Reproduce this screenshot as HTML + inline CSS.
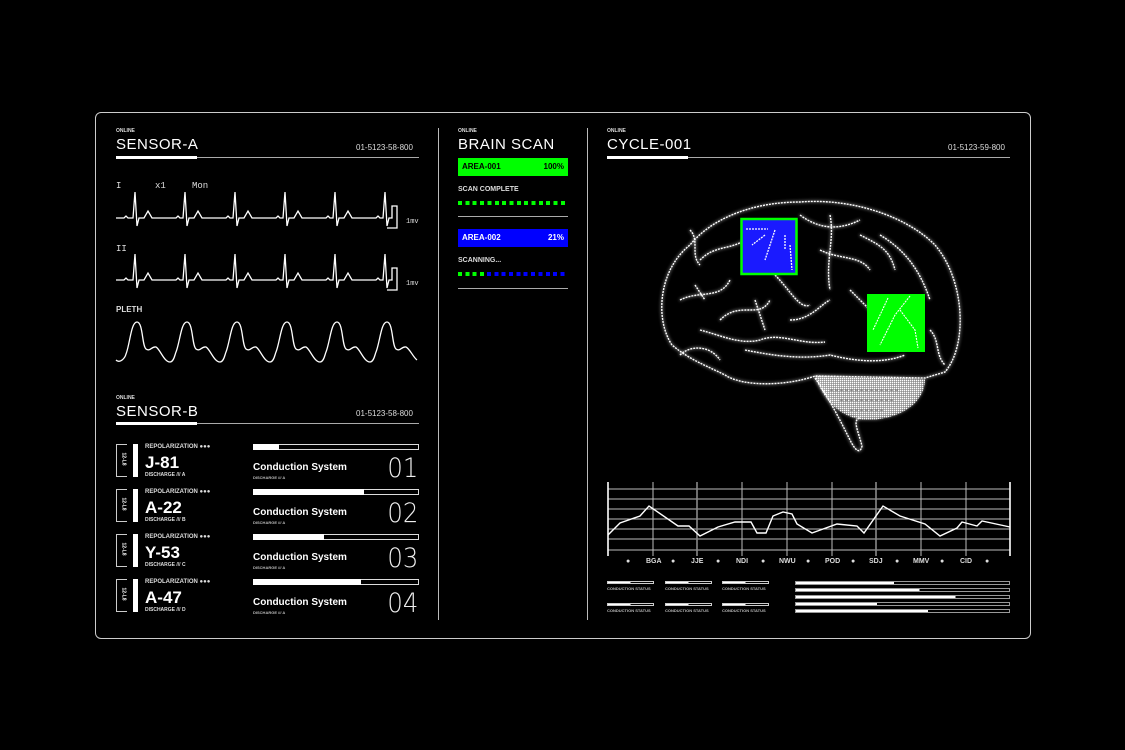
<!DOCTYPE html>
<html><head><meta charset="utf-8">
<style>
*{margin:0;padding:0;box-sizing:border-box}
body{width:1125px;height:750px;background:#000;position:relative;overflow:hidden;font-family:"Liberation Sans",sans-serif;color:#fff}
.a{position:absolute;white-space:nowrap}
.on{font-size:5px;font-weight:bold;color:#ddd}
.h{font-size:15px;letter-spacing:.5px;line-height:15px}
.code{font-size:8px;color:#ddd}
.sm{font-size:7px;font-weight:bold;color:#ddd}
.tiny{font-size:4px;font-weight:bold;color:#bbb}
.num{font-size:27px;line-height:27px;color:#eee;font-family:'DejaVu Sans',sans-serif;font-weight:200;transform:scaleX(.9);transform-origin:right}
</style></head><body>
<div class="a" style="left:95px;top:112px;width:936px;height:527px;border:1px solid #ccc;border-radius:6px"></div>
<div class="a" style="left:438px;top:128px;width:1px;height:492px;background:#bbb"></div>
<div class="a" style="left:587px;top:128px;width:1px;height:492px;background:#bbb"></div>

<div class="a on" style="left:116px;top:128px">ONLINE</div>
<div class="a h" style="left:116px;top:137px">SENSOR-A</div>
<div class="a code" style="left:356px;top:143px">01-5123-58-800</div>
<div class="a" style="left:116px;top:157px;width:303px;height:1px;background:#aaa"></div>
<div class="a" style="left:116px;top:156px;width:81px;height:3px;background:#fff"></div>
<div class="a sm" style="left:116px;top:181px;font-family:'Liberation Mono',monospace;font-weight:normal;font-size:9px">I</div>
<div class="a sm" style="left:155px;top:181px;font-family:'Liberation Mono',monospace;font-weight:normal;font-size:9px">x1</div>
<div class="a sm" style="left:192px;top:181px;font-family:'Liberation Mono',monospace;font-weight:normal;font-size:9px">Mon</div>
<div class="a sm" style="left:116px;top:244px;font-family:'Liberation Mono',monospace;font-weight:normal;font-size:9px">II</div>
<div class="a sm" style="left:116px;top:305px;font-size:8px">PLETH</div>
<div class="a" style="left:406px;top:218px;font-size:7px;color:#ddd;font-family:'Liberation Mono',monospace">1mv</div>
<div class="a" style="left:406px;top:280px;font-size:7px;color:#ddd;font-family:'Liberation Mono',monospace">1mv</div>

<svg class="a" style="left:0;top:0" width="1125" height="750" fill="none" stroke="#fff" stroke-width="1.3">
<path d="M116 218 h8 l2 -2 l2 2 h5 l2 -26 l2 34 l2 -8 h5 l4 -7 l4 7 h14 h10 l2 -2 l2 2 h3 l2 -26 l2 34 l2 -8 h5 l4 -7 l4 7 h14 h10 l2 -2 l2 2 h3 l2 -26 l2 34 l2 -8 h5 l4 -7 l4 7 h14 h10 l2 -2 l2 2 h3 l2 -26 l2 34 l2 -8 h5 l4 -7 l4 7 h14 h10 l2 -2 l2 2 h3 l2 -26 l2 34 l2 -8 h5 l4 -7 l4 7 h14 h10 l2 -2 l2 2 h3 l2 -26 l2 34 l2 -8 h3 v-12 h5 v22 h-10"/>
<path d="M116 280 h8 l2 -2 l2 2 h5 l2 -26 l2 34 l2 -8 h5 l4 -7 l4 7 h14 h10 l2 -2 l2 2 h3 l2 -26 l2 34 l2 -8 h5 l4 -7 l4 7 h14 h10 l2 -2 l2 2 h3 l2 -26 l2 34 l2 -8 h5 l4 -7 l4 7 h14 h10 l2 -2 l2 2 h3 l2 -26 l2 34 l2 -8 h5 l4 -7 l4 7 h14 h10 l2 -2 l2 2 h3 l2 -26 l2 34 l2 -8 h5 l4 -7 l4 7 h14 h10 l2 -2 l2 2 h3 l2 -26 l2 34 l2 -8 h3 v-12 h5 v22 h-10"/>
<path d="M116 360 c4 4 9 -2 10 -6 c4 -10 5 -32 11 -32 c6 0 5 24 9 27 c4 3 6 -3 10 -2 c4 2 8 15 14 15 c4 0 5 -8 6 -10 c4 -10 5 -30 11 -30 c6 0 5 24 9 27 c4 3 6 -3 10 -2 c4 2 8 15 14 15 c4 0 5 -8 6 -10 c4 -10 5 -30 11 -30 c6 0 5 24 9 27 c4 3 6 -3 10 -2 c4 2 8 15 14 15 c4 0 5 -8 6 -10 c4 -10 5 -30 11 -30 c6 0 5 24 9 27 c4 3 6 -3 10 -2 c4 2 8 15 14 15 c4 0 5 -8 6 -10 c4 -10 5 -30 11 -30 c6 0 5 24 9 27 c4 3 6 -3 10 -2 c4 2 8 15 14 15 c4 0 5 -8 6 -10 c4 -10 5 -30 11 -30 c6 0 5 24 9 27 c4 3 6 -3 10 -2 c4 2 7 10 11 13"/>
<g stroke="#bbb" stroke-width="1">
<path d="M608 489H1010M608 499H1010M608 509H1010M608 519H1010M608 529H1010M608 539H1010M608 550H1010"/>
<path d="M653 482V556M742 482V556M787 482V556M832 482V556M921 482V556M966 482V556"/>
</g>
<path d="M697 482V556M876 482V556" stroke="#888" stroke-width="1.6"/>
<path d="M608 482V556M1010 482V556" stroke="#fff" stroke-width="1.6"/>
<polyline stroke-width="1.4" points="608,535 620,523 640,516 649,506 678,526 689,526 700,536 718,527 735,522 751,522 757,533 766,533 773,516 783,512 792,514 797,524 812,533 837,524 857,526 864,533 883,506 900,516 925,524 940,536 957,528 962,522 977,526 982,521 1010,527"/>
</svg>

<div class="a on" style="left:116px;top:395px">ONLINE</div>
<div class="a h" style="left:116px;top:404px">SENSOR-B</div>
<div class="a code" style="left:356px;top:409px">01-5123-58-800</div>
<div class="a" style="left:116px;top:423px;width:303px;height:1px;background:#aaa"></div>
<div class="a" style="left:116px;top:422px;width:81px;height:3px;background:#fff"></div>

<div class="a" style="left:0;top:444px">
<div class="a" style="left:116px;top:0;width:11px;height:33px;border:1px solid #ccc;border-right:none"></div>
<div class="a" style="left:117px;top:12px;font-size:5px;font-weight:bold;transform:rotate(90deg)">12-L8</div>
<div class="a" style="left:133px;top:0;width:5px;height:33px;background:#fff"></div>
<div class="a sm" style="left:145px;top:0;font-size:6px">REPOLARIZATION ●●●</div>
<div class="a" style="left:145px;top:10px;font-size:17px;font-weight:bold;line-height:17px">J-81</div>
<div class="a sm" style="left:145px;top:28px;font-size:5px">DISCHARGE /// A</div>
<div class="a" style="left:253px;top:0;width:166px;height:6px;border:1px solid #ddd"></div>
<div class="a" style="left:253px;top:0;width:26px;height:6px;background:#fff"></div>
<div class="a" style="left:253px;top:18px;font-size:10px;font-weight:bold">Conduction System</div>
<div class="a tiny" style="left:253px;top:31px">DISCHARGE /// A</div>
<div class="a num" style="left:384px;top:11px">01</div>
</div>
<div class="a" style="left:0;top:489px">
<div class="a" style="left:116px;top:0;width:11px;height:33px;border:1px solid #ccc;border-right:none"></div>
<div class="a" style="left:117px;top:12px;font-size:5px;font-weight:bold;transform:rotate(90deg)">12-L8</div>
<div class="a" style="left:133px;top:0;width:5px;height:33px;background:#fff"></div>
<div class="a sm" style="left:145px;top:0;font-size:6px">REPOLARIZATION ●●●</div>
<div class="a" style="left:145px;top:10px;font-size:17px;font-weight:bold;line-height:17px">A-22</div>
<div class="a sm" style="left:145px;top:28px;font-size:5px">DISCHARGE /// B</div>
<div class="a" style="left:253px;top:0;width:166px;height:6px;border:1px solid #ddd"></div>
<div class="a" style="left:253px;top:0;width:111px;height:6px;background:#fff"></div>
<div class="a" style="left:253px;top:18px;font-size:10px;font-weight:bold">Conduction System</div>
<div class="a tiny" style="left:253px;top:31px">DISCHARGE /// A</div>
<div class="a num" style="left:384px;top:11px">02</div>
</div>
<div class="a" style="left:0;top:534px">
<div class="a" style="left:116px;top:0;width:11px;height:33px;border:1px solid #ccc;border-right:none"></div>
<div class="a" style="left:117px;top:12px;font-size:5px;font-weight:bold;transform:rotate(90deg)">12-L8</div>
<div class="a" style="left:133px;top:0;width:5px;height:33px;background:#fff"></div>
<div class="a sm" style="left:145px;top:0;font-size:6px">REPOLARIZATION ●●●</div>
<div class="a" style="left:145px;top:10px;font-size:17px;font-weight:bold;line-height:17px">Y-53</div>
<div class="a sm" style="left:145px;top:28px;font-size:5px">DISCHARGE /// C</div>
<div class="a" style="left:253px;top:0;width:166px;height:6px;border:1px solid #ddd"></div>
<div class="a" style="left:253px;top:0;width:71px;height:6px;background:#fff"></div>
<div class="a" style="left:253px;top:18px;font-size:10px;font-weight:bold">Conduction System</div>
<div class="a tiny" style="left:253px;top:31px">DISCHARGE /// A</div>
<div class="a num" style="left:384px;top:11px">03</div>
</div>
<div class="a" style="left:0;top:579px">
<div class="a" style="left:116px;top:0;width:11px;height:33px;border:1px solid #ccc;border-right:none"></div>
<div class="a" style="left:117px;top:12px;font-size:5px;font-weight:bold;transform:rotate(90deg)">12-L8</div>
<div class="a" style="left:133px;top:0;width:5px;height:33px;background:#fff"></div>
<div class="a sm" style="left:145px;top:0;font-size:6px">REPOLARIZATION ●●●</div>
<div class="a" style="left:145px;top:10px;font-size:17px;font-weight:bold;line-height:17px">A-47</div>
<div class="a sm" style="left:145px;top:28px;font-size:5px">DISCHARGE /// D</div>
<div class="a" style="left:253px;top:0;width:166px;height:6px;border:1px solid #ddd"></div>
<div class="a" style="left:253px;top:0;width:108px;height:6px;background:#fff"></div>
<div class="a" style="left:253px;top:18px;font-size:10px;font-weight:bold">Conduction System</div>
<div class="a tiny" style="left:253px;top:31px">DISCHARGE /// A</div>
<div class="a num" style="left:384px;top:11px">04</div>
</div>

<div class="a on" style="left:458px;top:128px">ONLINE</div>
<div class="a h" style="left:458px;top:137px">BRAIN SCAN</div>
<div class="a" style="left:458px;top:158px;width:110px;height:18px;background:#0f0;color:#000;font-size:8px;font-weight:bold;padding:4px 4px;display:flex;justify-content:space-between"><span>AREA-001</span><span>100%</span></div>
<div class="a sm" style="left:458px;top:186px">SCAN COMPLETE</div>
<div class="a" style="left:458px;top:201px;width:110px;height:4px;background:repeating-linear-gradient(90deg,#0f0 0 4px,transparent 4px 7.35px)"></div>
<div class="a" style="left:458px;top:216px;width:110px;height:1px;background:#aaa"></div>
<div class="a" style="left:458px;top:229px;width:110px;height:18px;background:#00f;color:#fff;font-size:8px;font-weight:bold;padding:4px 4px;display:flex;justify-content:space-between"><span>AREA-002</span><span>21%</span></div>
<div class="a sm" style="left:458px;top:257px">SCANNING...</div>
<div class="a" style="left:458px;top:272px;width:110px;height:4px;background:repeating-linear-gradient(90deg,#0f0 0 4px,transparent 4px 7.35px) 0 0/29.4px 4px no-repeat,repeating-linear-gradient(90deg,#00f 0 4px,transparent 4px 7.35px) 29.4px 0/81px 4px no-repeat"></div>
<div class="a" style="left:458px;top:288px;width:110px;height:1px;background:#aaa"></div>

<div class="a on" style="left:607px;top:128px">ONLINE</div>
<div class="a h" style="left:607px;top:137px">CYCLE-001</div>
<div class="a code" style="left:948px;top:143px">01-5123-59-800</div>
<div class="a" style="left:607px;top:157px;width:403px;height:1px;background:#aaa"></div>
<div class="a" style="left:607px;top:156px;width:81px;height:3px;background:#fff"></div>

<svg class="a" style="left:0;top:0" width="1125" height="750" fill="none">
<defs><filter id="g"><feGaussianBlur stdDeviation="1.5" result="b"/><feMerge><feMergeNode in="b"/><feMergeNode in="SourceGraphic"/></feMerge></filter>
<pattern id="dp" width="2" height="2" patternUnits="userSpaceOnUse"><rect width="1.4" height="1.4" fill="#fff"/></pattern></defs>
<g stroke="#fff" stroke-width="1.4" stroke-dasharray="2 1" filter="url(#g)">
<path d="M672 345 C655 320 658 270 690 245 C710 220 750 202 800 202 C850 198 905 215 935 245 C965 280 968 345 945 372 L925 378 L815 376 C790 385 745 388 725 375 C705 365 690 360 672 345 Z"/>
<path d="M815 378 C830 400 840 420 850 440 C855 450 860 455 862 446 C858 430 852 420 860 418"/>
<path d="M680 300 C700 290 720 300 730 280 M700 330 C720 335 740 345 760 340 C780 332 800 345 825 342 M745 350 C770 355 800 360 830 355 C850 360 880 365 905 355 M720 320 C740 300 760 320 770 300 M775 275 C790 290 800 310 810 305 M800 215 C820 230 840 230 860 220 M820 250 C840 260 860 255 870 270 M880 235 C905 250 920 270 930 300 M700 260 C715 245 730 250 745 240 M755 300 L765 330 M790 320 C810 320 820 305 830 300 M850 290 C860 300 870 310 880 320 M930 330 C940 340 935 355 945 365 M695 285 L705 300 M680 355 C690 345 710 345 720 360 M690 230 C700 240 690 255 700 265 M830 215 C835 240 825 260 830 290 M860 235 C880 245 890 250 895 270"/>
</g>
<path d="M815 376 L925 379 C925 400 905 418 870 420 C845 420 825 405 815 376 Z" fill="url(#dp)" filter="url(#g)"/>
<path d="M830 390 H900 M840 400 H895 M850 410 H885" stroke="#555" stroke-width="1" stroke-dasharray="3 2"/>
<rect x="741.5" y="219" width="55" height="55" fill="#1a1aff" stroke="#0f0" stroke-width="2.5"/>
<path d="M746 229 H768 M765 235 L752 245 M775 230 L765 260 M785 235 V250 M790 245 L792 270" stroke="#fff" stroke-width="1.3" stroke-dasharray="2 1"/>
<rect x="867" y="294" width="58" height="58" fill="#0f0"/>
<path d="M888 298 L873 330 M910 296 L895 315 L880 345 M900 310 L915 330 L918 348" stroke="#fff" stroke-width="1.1" stroke-dasharray="2 1"/>
</svg>

<div class="a" style="left:0;top:558px;width:1125px;font-size:7px;font-weight:bold;color:#ddd">
<span class="a" style="left:626px">●</span><span class="a" style="left:646px">BGA</span>
<span class="a" style="left:671px">●</span><span class="a" style="left:691px">JJE</span>
<span class="a" style="left:716px">●</span><span class="a" style="left:736px">NDI</span>
<span class="a" style="left:761px">●</span><span class="a" style="left:779px">NWU</span>
<span class="a" style="left:806px">●</span><span class="a" style="left:825px">POD</span>
<span class="a" style="left:851px">●</span><span class="a" style="left:869px">SDJ</span>
<span class="a" style="left:895px">●</span><span class="a" style="left:913px">MMV</span>
<span class="a" style="left:940px">●</span><span class="a" style="left:960px">CID</span>
<span class="a" style="left:985px">●</span>
</div>

<div class="a" style="left:607px;top:581px;width:47px;height:3px;border:1px solid #ccc;background:linear-gradient(90deg,#fff 50%,#000 50% 53%,transparent 53%)"></div>
<div class="a" style="left:665px;top:581px;width:47px;height:3px;border:1px solid #ccc;background:linear-gradient(90deg,#fff 50%,#000 50% 53%,transparent 53%)"></div>
<div class="a" style="left:722px;top:581px;width:47px;height:3px;border:1px solid #ccc;background:linear-gradient(90deg,#fff 50%,#000 50% 53%,transparent 53%)"></div>
<div class="a tiny" style="left:607px;top:586px">CONDUCTION STATUS</div>
<div class="a tiny" style="left:665px;top:586px">CONDUCTION STATUS</div>
<div class="a tiny" style="left:722px;top:586px">CONDUCTION STATUS</div>
<div class="a" style="left:607px;top:603px;width:47px;height:3px;border:1px solid #ccc;background:linear-gradient(90deg,#fff 50%,#000 50% 53%,transparent 53%)"></div>
<div class="a" style="left:665px;top:603px;width:47px;height:3px;border:1px solid #ccc;background:linear-gradient(90deg,#fff 50%,#000 50% 53%,transparent 53%)"></div>
<div class="a" style="left:722px;top:603px;width:47px;height:3px;border:1px solid #ccc;background:linear-gradient(90deg,#fff 50%,#000 50% 53%,transparent 53%)"></div>
<div class="a tiny" style="left:607px;top:608px">CONDUCTION STATUS</div>
<div class="a tiny" style="left:665px;top:608px">CONDUCTION STATUS</div>
<div class="a tiny" style="left:722px;top:608px">CONDUCTION STATUS</div>

<div class="a" style="left:795px;top:581px;width:215px;height:4px;border:1px solid #999;background:linear-gradient(90deg,#fff 46%,transparent 46%)"></div>
<div class="a" style="left:795px;top:588px;width:215px;height:4px;border:1px solid #999;background:linear-gradient(90deg,#fff 58%,transparent 58%)"></div>
<div class="a" style="left:795px;top:595px;width:215px;height:4px;border:1px solid #999;background:linear-gradient(90deg,#fff 75%,transparent 75%)"></div>
<div class="a" style="left:795px;top:602px;width:215px;height:4px;border:1px solid #999;background:linear-gradient(90deg,#fff 38%,transparent 38%)"></div>
<div class="a" style="left:795px;top:609px;width:215px;height:4px;border:1px solid #999;background:linear-gradient(90deg,#fff 62%,transparent 62%)"></div>
</body></html>
